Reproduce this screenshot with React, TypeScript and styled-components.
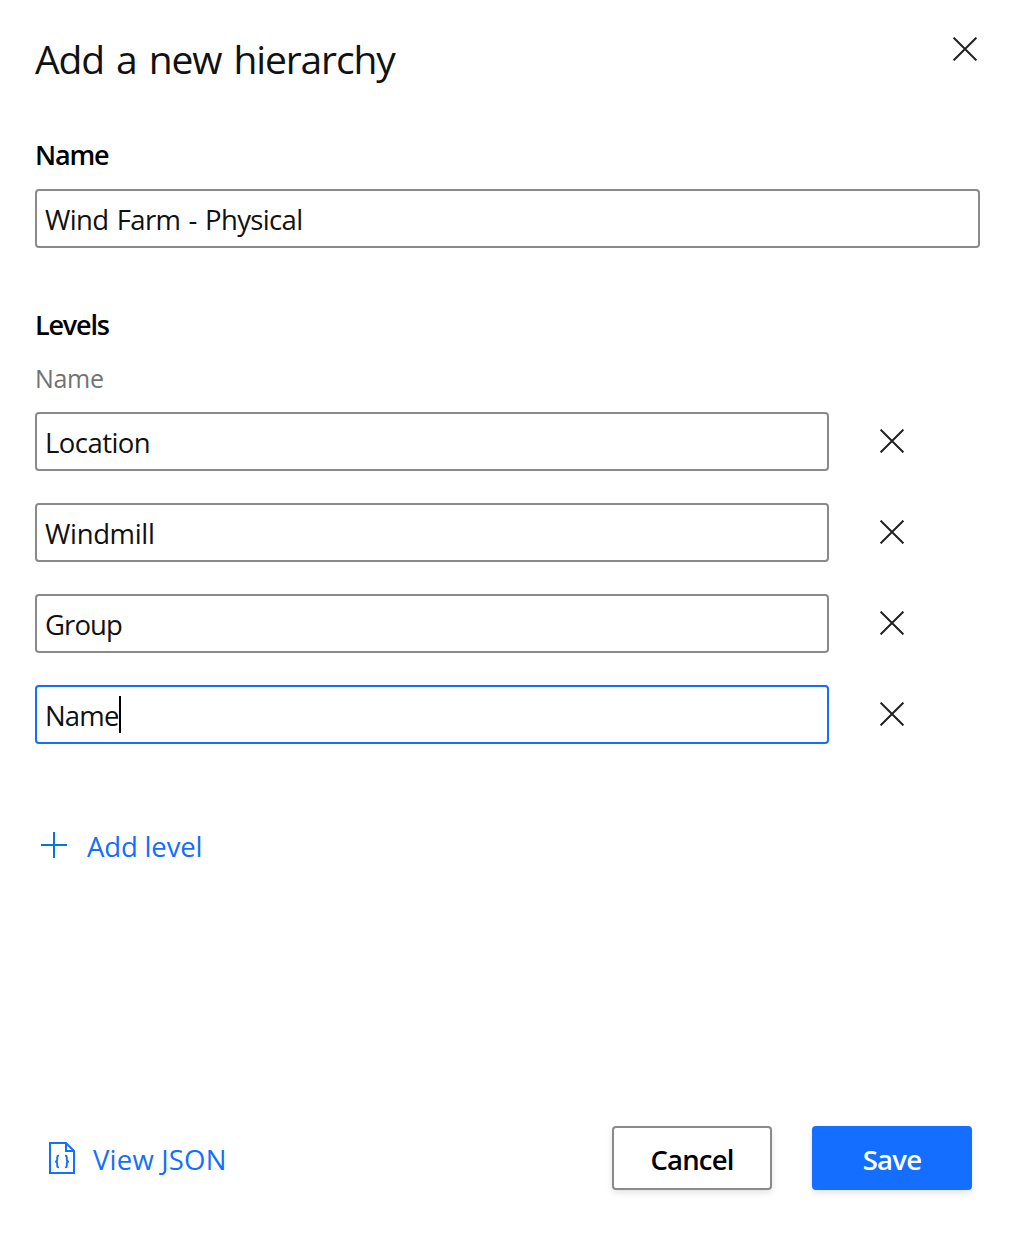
import React from "react";
import styled, { createGlobalStyle } from "styled-components";

const GlobalStyle = createGlobalStyle`
  * { box-sizing: border-box; }
  body { margin: 0; background: #fff; }
`;

const Panel = styled.main`
  display: flex;
  flex-direction: column;
  width: 1016px;
  height: 1236px;
  padding: 32px 36px 46px 35px;
  background: #fff;
  color: #000;
  font-family: "Open Sans", "Noto Sans", sans-serif;
  font-size: 27.5px;
  font-weight: 400;
`;

const Header = styled.header`
  display: flex;
  justify-content: space-between;
  height: 54px;
`;

const Title = styled.h1`
  margin: 0;
  color: #111;
  font-size: 39px;
  font-weight: 400;
  line-height: 54px;
  letter-spacing: -1.15px;
  word-spacing: 3.2px;
  white-space: nowrap;
`;

const IconButton = styled.button`
  display: flex;
  align-items: center;
  justify-content: center;
  width: 30px;
  height: 34px;
  padding: 0;
  border: 0;
  background: none;
`;

const Label = styled.h2<{ $top: number }>`
  margin: ${(p) => p.$top}px 0 0;
  font-size: 27px;
  font-weight: 600;
  line-height: 36px;
  letter-spacing: -1.2px;
`;

const ColumnName = styled.div`
  margin: 19px 0 18px;
  color: #737373;
  font-size: 25px;
  line-height: 32px;
  letter-spacing: -0.3px;
`;

const Field = styled.div<{ $focused?: boolean; $spacing?: number }>`
  display: flex;
  align-items: center;
  height: 59px;
  padding: 2px 8px 0;
  border: 2px solid ${(p) => (p.$focused ? "#146eff" : "#8a8a8a")};
  border-radius: 4px;
  color: #111;
  letter-spacing: ${(p) => p.$spacing ?? 0}px;
  white-space: pre;
`;

const NameField = styled(Field)`
  margin-top: 16px;
  word-spacing: 1.8px;
`;

const Caret = styled.span`
  width: 2px;
  height: 37px;
  margin-bottom: 2px;
  background: #000;
`;

const Levels = styled.div`
  display: flex;
  flex-direction: column;
  gap: 32px;
`;

const LevelRow = styled.div`
  display: grid;
  grid-template-columns: 794px 30px;
  column-gap: 48px;
  align-items: center;
`;

const RemoveButton = styled(IconButton)`
  margin-bottom: 2px;
`;

const Action = styled.button<{ $gap: number; $spacing: number }>`
  display: flex;
  align-items: center;
  gap: ${(p) => p.$gap}px;
  padding: 0;
  border: 0;
  background: none;
  color: #146eff;
  font: inherit;
  line-height: 40px;
  letter-spacing: ${(p) => p.$spacing}px;
`;

const ActionText = styled.span<{ $drop: number }>`
  padding-top: ${(p) => p.$drop}px;
`;

const AddLevel = styled(Action)`
  align-self: flex-start;
  margin: 79px 0 0 6px;
`;

const Footer = styled.footer`
  display: flex;
  align-items: center;
  justify-content: space-between;
  margin-top: auto;
  padding: 0 8px 0 14px;
`;

const Buttons = styled.div`
  display: flex;
  gap: 40px;
`;

const Button = styled.button<{ $primary?: boolean }>`
  width: 160px;
  height: 64px;
  padding: 3px 0 0;
  border: 2px solid ${(p) => (p.$primary ? "#146eff" : "#8a8a8a")};
  border-radius: 4px;
  background: ${(p) => (p.$primary ? "#146eff" : "#fff")};
  color: ${(p) => (p.$primary ? "#fff" : "#000")};
  box-shadow: 0 3px 7px rgba(0, 0, 0, 0.11);
  font: inherit;
  font-weight: 600;
  letter-spacing: -0.8px;
`;

const CrossIcon = () => (
  <svg width="24" height="24" viewBox="0 0 24 24" fill="none" stroke="#222" strokeWidth="2">
    <path d="M.6.6 23.4 23.4M23.4.6.6 23.4" />
  </svg>
);

const PlusIcon = () => (
  <svg width="26" height="26" viewBox="0 0 26 26" fill="none" stroke="#0078d4" strokeWidth="2">
    <path d="M13 0v26M0 13h26" />
  </svg>
);

const JsonIcon = () => (
  <svg width="26" height="32" viewBox="0 0 26 32" fill="none" stroke="#146eff" strokeWidth="2">
    <path d="M1 1h16l8 8v22H1zM17 1v8h8" />
    <path
      strokeWidth="1.9"
      d="M10 13.8H9.6Q8.2 13.8 8.2 15.3v2.5Q8.2 19.6 6 19.6 8.2 19.6 8.2 21.4v2.5q0 1.5 1.4 1.5h.4M16 13.8h.4q1.4 0 1.4 1.5v2.5q0 1.8 2.2 1.8-2.2 0-2.2 1.8v2.5q0 1.5-1.4 1.5H16"
    />
  </svg>
);

const levels = [
  { name: "Location", spacing: -0.55 },
  { name: "Windmill", spacing: -0.35 },
  { name: "Group", spacing: -0.9 },
  { name: "Name", spacing: -0.85, focused: true },
];

export default function App() {
  return (
    <>
      <GlobalStyle />
      <Panel>
        <Header>
          <Title>Add a new hierarchy</Title>
          <IconButton aria-label="Close">
            <CrossIcon />
          </IconButton>
        </Header>
        <Label $top={51}>Name</Label>
        <NameField $spacing={-0.65}>Wind Farm - Physical</NameField>
        <Label $top={59}>Levels</Label>
        <ColumnName>Name</ColumnName>
        <Levels>
          {levels.map((level) => (
            <LevelRow key={level.name}>
              <Field $focused={level.focused} $spacing={level.spacing}>
                {level.name}
                {level.focused && <Caret />}
              </Field>
              <RemoveButton aria-label="Remove level">
                <CrossIcon />
              </RemoveButton>
            </LevelRow>
          ))}
        </Levels>
        <AddLevel $gap={20} $spacing={-0.15}>
          <PlusIcon />
          <ActionText $drop={4}>Add level</ActionText>
        </AddLevel>
        <Footer>
          <Action $gap={18} $spacing={0.2}>
            <JsonIcon />
            <ActionText $drop={4}>View JSON</ActionText>
          </Action>
          <Buttons>
            <Button>Cancel</Button>
            <Button $primary>Save</Button>
          </Buttons>
        </Footer>
      </Panel>
    </>
  );
}
